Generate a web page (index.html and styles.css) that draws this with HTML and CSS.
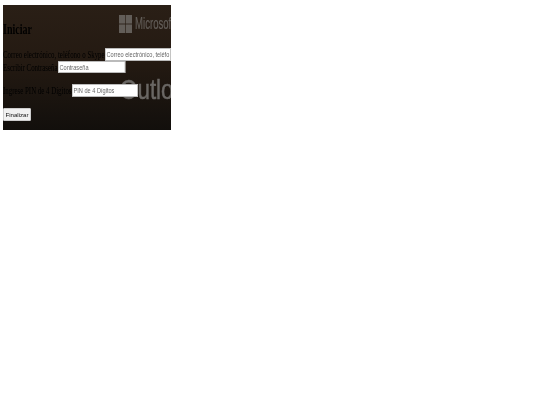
FILE: index.html
```html
<!DOCTYPE html>
<html lang="es">
<head>
<meta charset="utf-8">
<title>Iniciar</title>
<link rel="stylesheet" href="styles.css">
</head>
<body>
<main class="panel">
  <div class="brand">
    <svg class="logo" viewBox="0 0 21 21" width="13" height="18" preserveAspectRatio="none" aria-hidden="true">
      <rect x="0" y="0" width="10" height="10"/><rect x="11" y="0" width="10" height="10"/>
      <rect x="0" y="11" width="10" height="10"/><rect x="11" y="11" width="10" height="10"/>
    </svg>
    <span class="brand-name">Microsof</span>
  </div>
  <div class="outlook">Outlo</div>
  <form class="form">
    <h1 class="title">Iniciar</h1>
    <div class="row row-mail"><label>Correo electrónico, teléfono o Skype</label><input class="field field-mail" placeholder="Correo electrónico, teléfo"></div>
    <div class="row row-pass"><label>Escribir Contraseña</label><input class="field field-pass" placeholder="Contraseña"></div>
    <div class="row row-pin"><label>Ingrese PIN de 4 Dígitos</label><input class="field field-pin" placeholder="PIN de 4 Dígitos"></div>
    <button class="submit" type="button">Finalizar</button>
  </form>
</main>
</body>
</html>
```
FILE: styles.css
```css
html, body { margin: 0; padding: 0; background: #fff; }
body { padding: 5px 0 0 3px; }
.panel {
  position: relative;
  width: 168px;
  height: 125px;
  overflow: hidden;
  background: linear-gradient(180deg, #2a1f16 0%, #241a12 45%, #120f0c 100%);
  font-family: "Liberation Serif", serif;
  color: #000;
  filter: blur(0.35px);
}
.brand {
  position: absolute;
  left: 116px;
  top: 10px;
  display: flex;
  align-items: center;
  gap: 3px;
  white-space: nowrap;
}
.logo { fill: #625d58; display: block; }
.brand-name {
  display: block;
  font: 16px/18px "Liberation Sans", sans-serif;
  color: #625d58;
  -webkit-text-stroke: 0.2px #625d58;
  transform: scaleX(0.6);
  transform-origin: left center;
}
.outlook {
  position: absolute;
  left: 117px;
  top: 69px;
  font: 28px/32px "Liberation Sans", sans-serif;
  color: #6a6764;
  -webkit-text-stroke: 0.5px #6a6764;
  white-space: nowrap;
  transform: scaleX(0.8);
  transform-origin: left center;
}
.form { position: relative; display: flex; flex-direction: column; align-items: flex-start; }
.title {
  margin: 16px 0 0;
  font-size: 10px;
  line-height: 17px;
  font-weight: bold;
  transform: scaleY(1.4);
}
.row { display: flex; align-items: center; white-space: nowrap; font-size: 6.9px; }
.row label { display: block; transform: scaleY(1.55); }
.row-mail { margin-top: 10px; height: 13px; }
.row-pass { height: 12px; }
.row-pin { margin-top: 11px; height: 13px; }
.field {
  box-sizing: border-box;
  height: 100%;
  padding: 0 2px;
  border: 0;
  background: #fff;
  font: 7.6px/12px "Liberation Sans Narrow", "Liberation Sans", sans-serif;
  outline: 1px solid #bbb;
  outline-offset: -1px;
  transform: scaleX(0.74);
  transform-origin: left center;
}
.field::placeholder { color: #666; opacity: 1; }
.field-mail { width: 89px; }
.field-pass { width: 91px; }
.field-pin { width: 89px; }
.submit {
  margin-top: 11px;
  box-sizing: border-box;
  width: 28px;
  height: 13px;
  padding: 0;
  background: #f0f0f0;
  border: 1px solid #ccc;
  border-radius: 1px;
  font: 6.1px/11px "Liberation Sans Narrow", "Liberation Sans", sans-serif;
  color: #111;
}
```
